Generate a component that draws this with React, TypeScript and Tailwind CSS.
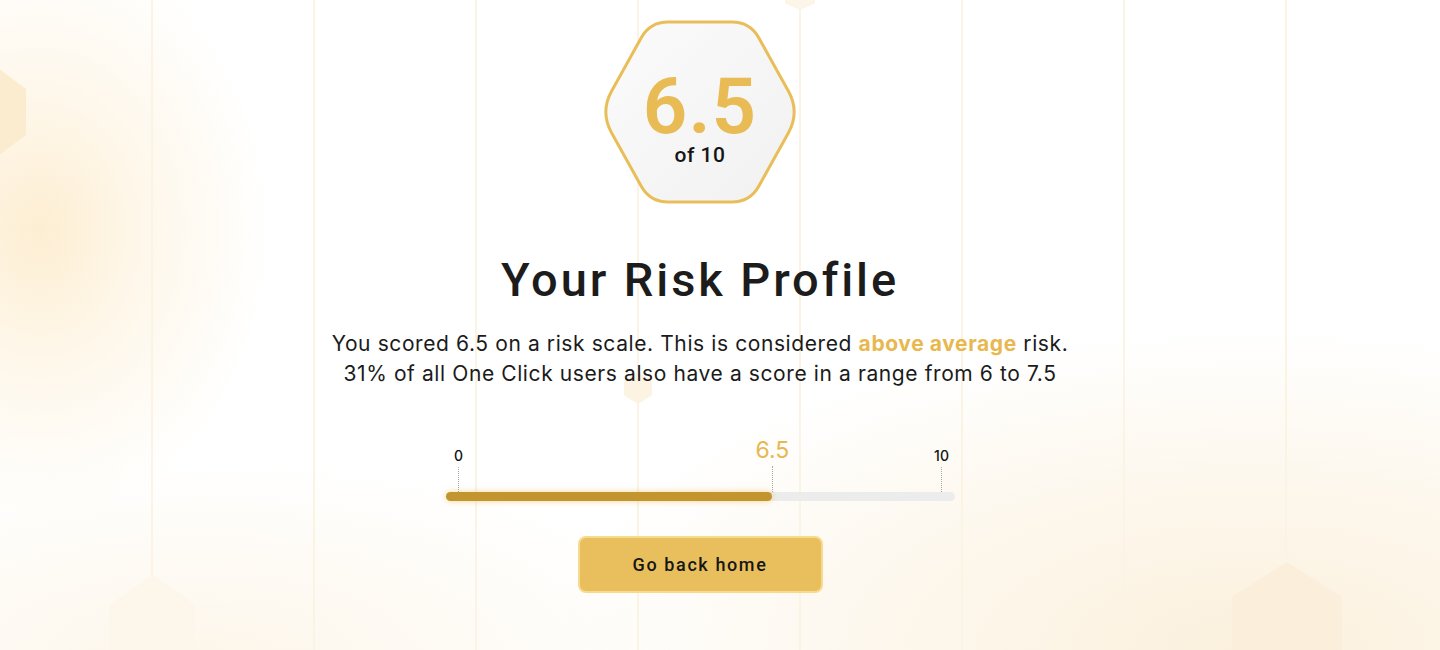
import React from "react";

type Pt = [number, number];

function roundedPoly(pts: Pt[], radii: number[]): string {
  const n = pts.length;
  let d = "";
  for (let i = 0; i < n; i++) {
    const p = pts[i];
    const prev = pts[(i - 1 + n) % n];
    const next = pts[(i + 1) % n];
    const r = radii[i];
    const v1x = prev[0] - p[0];
    const v1y = prev[1] - p[1];
    const l1 = Math.hypot(v1x, v1y);
    const v2x = next[0] - p[0];
    const v2y = next[1] - p[1];
    const l2 = Math.hypot(v2x, v2y);
    const a: Pt = [p[0] + (v1x / l1) * r, p[1] + (v1y / l1) * r];
    const b: Pt = [p[0] + (v2x / l2) * r, p[1] + (v2y / l2) * r];
    d += (i === 0 ? "M" : "L") + a[0].toFixed(2) + " " + a[1].toFixed(2);
    d += " Q" + p[0] + " " + p[1] + " " + b[0].toFixed(2) + " " + b[1].toFixed(2) + " ";
  }
  return d + "Z";
}

const hexPath = roundedPoly(
  [
    [52, 2],
    [152, 2],
    [202, 92],
    [152, 182],
    [52, 182],
    [2, 92],
  ],
  [18, 18, 24, 18, 18, 24]
);

function PointyHex({ w, h, color }: { w: number; h: number; color: string }) {
  const s = h * 0.27;
  return (
    <svg width={w} height={h} viewBox={`0 0 ${w} ${h}`}>
      <polygon
        points={`${w / 2},0 ${w},${s} ${w},${h - s} ${w / 2},${h} 0,${h - s} 0,${s}`}
        fill={color}
      />
    </svg>
  );
}

const lines = [0, 1, 2, 3, 4, 5, 6, 7];
const heading = { fontFamily: "Roboto, 'DejaVu Sans', sans-serif" };

export default function App() {
  const score = 6.5;
  const pct = (score / 10) * 100;

  return (
    <div
      className="relative w-[1440px] h-[650px] overflow-hidden bg-white"
      style={{ fontFamily: "Inter, 'Noto Sans', sans-serif" }}
    >
      {/* decorative background */}
      <div className="absolute inset-0 bg-[radial-gradient(ellipse_230px_290px_at_40px_230px,#fdeed2_0%,#fef7ea_45%,rgba(255,255,255,0)_100%)]" />
      <div className="absolute inset-0 bg-[radial-gradient(ellipse_700px_320px_at_1250px_650px,#fbf0dd_0%,#fdf7ec_50%,rgba(255,255,255,0)_100%)]" />
      <div className="absolute inset-0 bg-[radial-gradient(ellipse_500px_200px_at_200px_660px,#fdf6ea_0%,rgba(255,255,255,0)_100%)]" />
      <div className="absolute inset-0 flex gap-[160px] pl-[151px]">
        {lines.map((i) => (
          <div key={i} className="h-full w-[2px] bg-[#fbf3e4]" />
        ))}
      </div>
      <div className="absolute left-[-46px] top-[62px]">
        <PointyHex w={72} h={100} color="#fbeccf" />
      </div>
      <div className="absolute left-[110px] top-[575px]">
        <PointyHex w={85} h={110} color="#fdf6ea" />
      </div>
      <div className="absolute left-[624px] top-[372px]">
        <PointyHex w={28} h={32} color="#fcf3e2" />
      </div>
      <div className="absolute left-[785px] top-[-14px]">
        <PointyHex w={30} h={24} color="#fdf5e7" />
      </div>
      <div className="absolute left-[1232px] top-[562px]">
        <PointyHex w={110} h={130} color="#fbeedb" />
      </div>

      {/* content */}
      <div className="relative flex flex-col items-center pt-[20px] pr-[40px]">
        <div className="relative w-[204px] h-[184px] flex flex-col items-center justify-center">
          <svg className="absolute inset-0" width="204" height="184" viewBox="0 0 204 184">
            <defs>
              <linearGradient id="hexfill" x1="0" y1="0" x2="1" y2="1">
                <stop offset="0" stopColor="#fbfbfb" />
                <stop offset="1" stopColor="#f1f1f1" />
              </linearGradient>
            </defs>
            <path d={hexPath} fill="url(#hexfill)" stroke="#e9bd58" strokeWidth="3" />
          </svg>
          <div
            className="relative text-[78px] leading-[56px] font-semibold text-[#e8bb55] mt-[22px] tracking-[1px]"
            style={heading}
          >
            6.5
          </div>
          <div
            className="relative text-[21px] leading-[24px] font-medium text-[#151515] mt-[8px] tracking-[0.5px]"
            style={heading}
          >
            of 10
          </div>
        </div>

        <h1
          className="mt-[48px] text-[47px] leading-[55px] font-medium text-[#1c1c1c] tracking-[2.9px]"
          style={heading}
        >
          Your Risk Profile
        </h1>

        <p className="mt-[22px] text-[21px] leading-[30px] text-[#1b1b1b] text-center tracking-[0.6px]">
          You scored 6.5 on a risk scale. This is considered{" "}
          <span className="font-bold text-[#e8b84f]">above average</span> risk.
          <br />
          31% of all One Click users also have a score in a range from 6 to 7.5
        </p>

        {/* scale */}
        <div className="mt-[40px] w-[509px] flex flex-col">
          <div className="relative mx-[13px] h-[63px] flex justify-between items-end">
            <div className="w-0 flex flex-col items-center">
              <span className="text-[14px] leading-[16px] font-medium text-[#111] pb-[1px]">0</span>
              <div className="mt-[2px] h-[25px] border-l border-dotted border-[#a8a8a8]" />
            </div>
            <div
              className="absolute bottom-0 w-0 flex flex-col items-center"
              style={{ left: `${pct}%` }}
            >
              <span className="text-[23px] leading-[26px] text-[#e8b84f]">6.5</span>
              <div className="mt-[3px] h-[26px] border-l border-dotted border-[#a8a8a8]" />
            </div>
            <div className="w-0 flex flex-col items-center">
              <span className="text-[14px] leading-[16px] font-medium text-[#111] pb-[1px]">10</span>
              <div className="mt-[2px] h-[25px] border-l border-dotted border-[#a8a8a8]" />
            </div>
          </div>
          <div className="h-[9px] rounded-full bg-[#ececec] flex">
            <div
              className="h-full rounded-full bg-[#c3952f] shadow-[0_0_6px_rgba(232,187,85,0.6)]"
              style={{ width: `calc(13px + (100% - 26px) * ${score / 10})` }}
            />
          </div>
        </div>

        <button
          className="mt-[35px] w-[245px] h-[57px] rounded-[8px] bg-[#e8bf5c] border-2 border-[#f6da8e] text-[18px] font-medium text-[#161616] tracking-[1.6px]"
          style={heading}
        >
          Go back home
        </button>
      </div>
    </div>
  );
}
